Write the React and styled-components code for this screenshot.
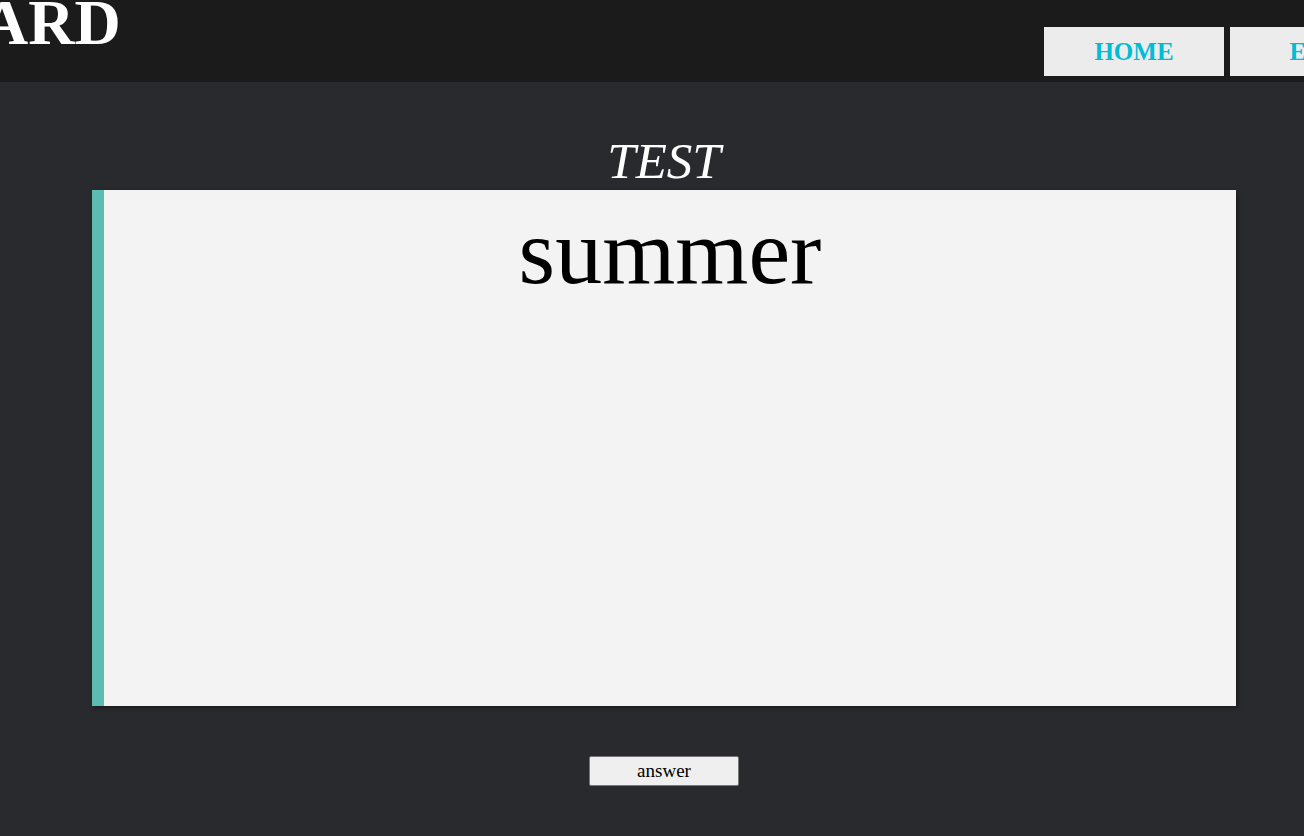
import React from "react";
import styled, { createGlobalStyle } from "styled-components";

const Global = createGlobalStyle`
  html, body {
    margin: 0;
    padding: 0;
    background: #292a2d;
    overflow: hidden;
  }
  body {
    font-family: "Liberation Serif", "Times New Roman", serif;
  }
  #root {
    min-height: 836px;
    background: #292a2d;
  }
`;

const Header = styled.header`
  display: flex;
  align-items: flex-end;
  height: 82px;
  box-sizing: border-box;
  padding-bottom: 6px;
  background: #1b1b1b;
  overflow: hidden;
`;

const Brand = styled.h1`
  flex: 0 0 1044px;
  align-self: flex-start;
  margin: -9px 0 0;
  text-indent: -18px;
  font-size: 64px;
  line-height: 1;
  font-weight: 700;
  color: #ffffff;
  white-space: nowrap;
`;

const Nav = styled.nav`
  display: flex;
  flex-shrink: 0;
  gap: 6px;
`;

const NavButton = styled.a`
  display: flex;
  align-items: center;
  justify-content: center;
  flex: 0 0 180px;
  height: 49px;
  background: #ececec;
  color: #00bcd4;
  font-size: 25px;
  font-weight: 700;
  text-decoration: none;
  cursor: pointer;
`;

const Main = styled.main`
  display: flex;
  flex-direction: column;
  align-items: stretch;
  padding: 50px 68px 50px 92px;
`;

const Title = styled.h2`
  margin: 0;
  text-align: center;
  font-size: 51px;
  font-style: italic;
  font-weight: 400;
  line-height: 58px;
  color: #ffffff;
`;

const Card = styled.section`
  height: 516px;
  box-sizing: border-box;
  border-left: 12px solid #5dbcb1;
  background: #f3f3f3;
  box-shadow: 2px 2px 4px rgba(0, 0, 0, 0.35);
  padding-top: 7px;
`;

const Word = styled.p`
  margin: 0;
  text-align: center;
  font-size: 94px;
  line-height: normal;
  color: #000000;
`;

const Actions = styled.div`
  display: flex;
  justify-content: center;
  padding-top: 50px;
`;

const AnswerButton = styled.button`
  width: 150px;
  height: 30px;
  box-sizing: border-box;
  padding: 0;
  border: 1px solid #767676;
  border-radius: 2px;
  background: #efefef;
  color: #000000;
  font-family: "Liberation Serif", "Times New Roman", serif;
  font-size: 19px;
  cursor: pointer;
`;

export default function App() {
  return (
    <>
      <Global />
      <Header>
        <Brand>ARD</Brand>
        <Nav>
          <NavButton>HOME</NavButton>
          <NavButton>EDIT</NavButton>
        </Nav>
      </Header>
      <Main>
        <Title>TEST</Title>
        <Card>
          <Word>summer</Word>
        </Card>
        <Actions>
          <AnswerButton>answer</AnswerButton>
        </Actions>
      </Main>
    </>
  );
}
